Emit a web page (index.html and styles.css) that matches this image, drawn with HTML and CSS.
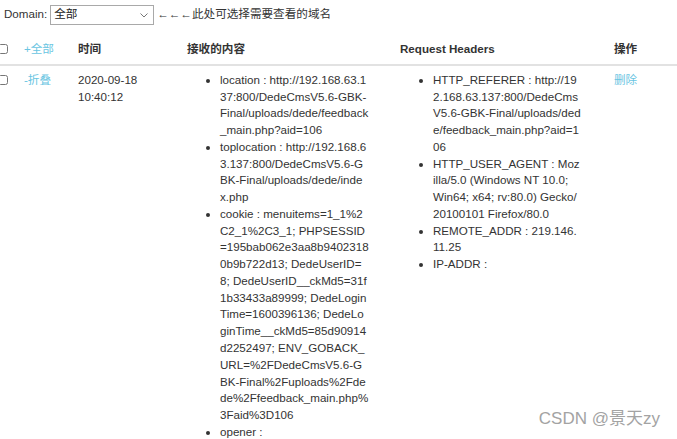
FILE: index.html
```html
<!DOCTYPE html>
<html lang="zh-CN">

<head>
    <meta charset="UTF-8">
    <meta name="viewport" content="width=device-width, initial-scale=1.0">
    <title>Domain</title>
    <link rel="stylesheet" href="styles.css">
</head>

<body>
    <!-- 域名选择 -->
    <div class="toolbar">
        <label for="domain">Domain:</label>
        <span class="select-wrap">
            <select id="domain" class="domain-select">
                <option>全部</option>
            </select>
            <svg class="select-arrow" width="8" height="5" viewBox="0 0 8 5">
                <path d="M0.5 0.5 L4 4 L7.5 0.5" fill="none" stroke="#777" stroke-width="1"/>
            </svg>
        </span>
        <span class="tip">←←←此处可选择需要查看的域名</span>
    </div>

    <!-- 记录列表 -->
    <table class="records">
        <colgroup>
            <col class="c-check">
            <col class="c-toggle">
            <col class="c-time">
            <col class="c-content">
            <col class="c-headers">
            <col>
        </colgroup>
        <thead>
            <tr>
                <th class="cell-check"><input type="checkbox" class="check"></th>
                <th><a href="javascript:;" class="link">+全部</a></th>
                <th>时间</th>
                <th>接收的内容</th>
                <th>Request Headers</th>
                <th>操作</th>
            </tr>
        </thead>
        <tbody>
            <tr>
                <td class="cell-check"><input type="checkbox" class="check"></td>
                <td><a href="javascript:;" class="link">-折叠</a></td>
                <td>2020-09-18 10:40:12</td>
                <td>
                    <ul class="kv kv-content">
                        <li>location : http://192.168.63.137:800/DedeCmsV5.6-GBK-Final/uploads/dede/feedback_main.php?aid=106</li>
                        <li>toplocation : http://192.168.63.137:800/DedeCmsV5.6-GBK-Final/uploads/dede/index.php</li>
                        <li>cookie : menuitems=1_1%2C2_1%2C3_1; PHPSESSID=195bab062e3aa8b94023180b9b722d13; DedeUserID=8; DedeUserID__ckMd5=31f1b33433a89999; DedeLoginTime=1600396136; DedeLoginTime__ckMd5=85d90914d2252497; ENV_GOBACK_URL=%2FDedeCmsV5.6-GBK-Final%2Fuploads%2Fdede%2Ffeedback_main.php%3Faid%3D106</li>
                        <li>opener :</li>
                    </ul>
                </td>
                <td>
                    <ul class="kv kv-headers">
                        <li>HTTP_REFERER : http://192.168.63.137:800/DedeCmsV5.6-GBK-Final/uploads/dede/feedback_main.php?aid=106</li>
                        <li>HTTP_USER_AGENT : Mozilla/5.0 (Windows NT 10.0; Win64; x64; rv:80.0) Gecko/20100101 Firefox/80.0</li>
                        <li>REMOTE_ADDR : 219.146.11.25</li>
                        <li>IP-ADDR :</li>
                    </ul>
                </td>
                <td><a href="javascript:;" class="link">删除</a></td>
            </tr>
        </tbody>
    </table>

    <!-- 水印 -->
    <div class="watermark">CSDN @景天zy</div>
</body>

</html>
```

FILE: styles.css
```css
* {
    box-sizing: border-box;
}

body {
    margin: 0;
    font-family: "Liberation Sans", Arial, "Noto Sans CJK SC", sans-serif;
    font-size: 11.6px;
    line-height: 16.76px;
    color: #333;
    background-color: #fff;
    overflow: hidden;
}

a {
    text-decoration: none;
}

.toolbar {
    display: flex;
    align-items: center;
    height: 33px;
    padding: 0 0 4px 4px;
}

.toolbar label {
    margin-right: 3px;
}

.select-wrap {
    position: relative;
    display: inline-block;
}

.domain-select {
    appearance: none;
    -webkit-appearance: none;
    width: 104px;
    height: 20px;
    padding: 0 0 0 3px;
    border: 1px solid #a9a9a9;
    border-radius: 0;
    background-color: #fff;
    font: inherit;
    color: #222;
    vertical-align: middle;
}

.select-arrow {
    position: absolute;
    top: 8px;
    right: 6px;
    pointer-events: none;
}

.tip {
    margin-left: 3px;
}

.records {
    width: 100%;
    table-layout: fixed;
    border-collapse: collapse;
}

.c-check {
    width: 18px;
}

.c-toggle {
    width: 54px;
}

.c-time {
    width: 109px;
}

.c-content {
    width: 213px;
}

.c-headers {
    width: 214px;
}

.records th {
    text-align: left;
    font-weight: bold;
    padding: 7.5px 0 6.5px 6px;
    border-bottom: 2px solid #e2e2e2;
}

.records td {
    vertical-align: top;
    padding: 6px 0 6px 6px;
}

.records .cell-check {
    padding-left: 0;
}

.check {
    width: 10px;
    height: 10px;
    margin: 3px 0 0 -2px;
    vertical-align: top;
}

.link {
    color: #6ac5e2;
    font-weight: normal;
}

.kv {
    margin: 0;
    padding-left: 33px;
    word-break: break-all;
}

.kv-content {
    width: 182px;
}

.kv-headers {
    width: 181px;
}

.watermark {
    position: absolute;
    right: 17px;
    bottom: 10px;
    font-size: 17px;
    line-height: 20px;
    color: #a3a3a3;
}
```
